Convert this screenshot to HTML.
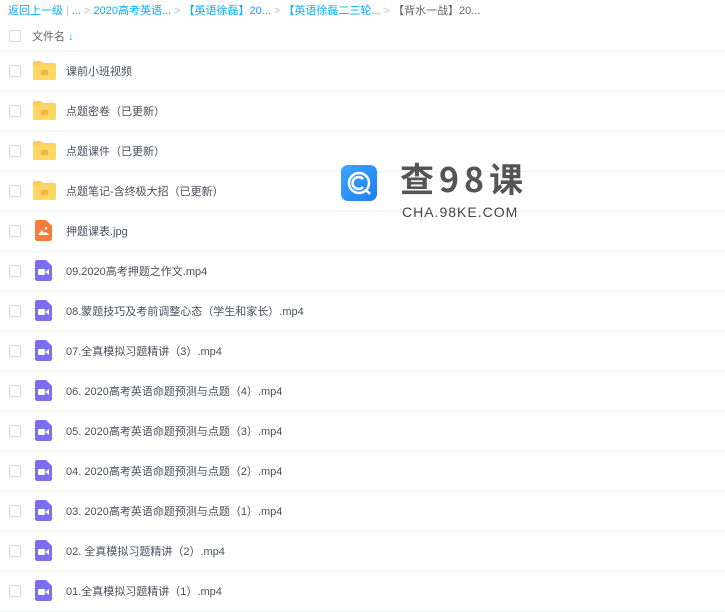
<!DOCTYPE html>
<html><head><meta charset="utf-8"><style>
*{margin:0;padding:0;box-sizing:border-box}
body{width:725px;height:600px;overflow:hidden;background:#fff;font-family:"Liberation Sans","Noto Sans CJK SC",sans-serif;font-size:11px;color:#4a4f5c;position:relative}
.bc{position:absolute;top:2px;left:8px;color:#09aaff;white-space:nowrap;font-size:11px}
.bc .g{color:#c0c4cc;margin:0 3px}
.bc .d{color:#666}
.cb{position:absolute;left:9px;width:12px;height:12px;border:1px solid #d5d9e0;border-radius:2px;background:#fff}
.hd{position:absolute;top:28px;left:32px;color:#666}
.line{position:absolute;left:0;width:725px;height:1px;background:#f1f2f5}
.row{position:absolute;left:0;width:725px;height:40px}
.row .cb{top:14px}
.row .t{position:absolute;left:66px;top:12px;white-space:nowrap}
.fold{position:absolute;left:33px;top:10px;width:23px;height:19px}
.fi{position:absolute;left:35px;top:9px;width:17px;height:21px;border-radius:2px}
</style></head><body>
<div class="bc">返回上一级<span class="g">|</span>...<span class="g">&gt;</span>2020高考英语...<span class="g">&gt;</span>【英语徐磊】20...<span class="g">&gt;</span>【英语徐磊二三轮...<span class="g">&gt;</span><span class="d">【背水一战】20...</span></div>
<div class="cb" style="top:30px"></div>
<div class="hd">文件名 <span style="color:#09aaff;font-weight:bold">↓</span></div>
<div class="line" style="top:51px"></div>

<div class="row" style="top:51px"><div class="cb"></div><svg class="fold" viewBox="0 0 23 19"><path d="M0 2a2 2 0 0 1 2-2h6l2 2h11a2 2 0 0 1 2 2v13a2 2 0 0 1-2 2H2a2 2 0 0 1-2-2z" fill="#fbcf54"/><rect x="0" y="4" width="23" height="15" rx="2" fill="#fcd766"/><rect x="8" y="9" width="7" height="5" fill="#f5b83a"/></svg><span class="t">课前小班视频</span></div>
<div class="line" style="top:91px"></div>
<div class="row" style="top:91px"><div class="cb"></div><svg class="fold" viewBox="0 0 23 19"><path d="M0 2a2 2 0 0 1 2-2h6l2 2h11a2 2 0 0 1 2 2v13a2 2 0 0 1-2 2H2a2 2 0 0 1-2-2z" fill="#fbcf54"/><rect x="0" y="4" width="23" height="15" rx="2" fill="#fcd766"/><rect x="8" y="9" width="7" height="5" fill="#f5b83a"/></svg><span class="t">点题密卷（已更新）</span></div>
<div class="line" style="top:131px"></div>
<div class="row" style="top:131px"><div class="cb"></div><svg class="fold" viewBox="0 0 23 19"><path d="M0 2a2 2 0 0 1 2-2h6l2 2h11a2 2 0 0 1 2 2v13a2 2 0 0 1-2 2H2a2 2 0 0 1-2-2z" fill="#fbcf54"/><rect x="0" y="4" width="23" height="15" rx="2" fill="#fcd766"/><rect x="8" y="9" width="7" height="5" fill="#f5b83a"/></svg><span class="t">点题课件（已更新）</span></div>
<div class="line" style="top:171px"></div>
<div class="row" style="top:171px"><div class="cb"></div><svg class="fold" viewBox="0 0 23 19"><path d="M0 2a2 2 0 0 1 2-2h6l2 2h11a2 2 0 0 1 2 2v13a2 2 0 0 1-2 2H2a2 2 0 0 1-2-2z" fill="#fbcf54"/><rect x="0" y="4" width="23" height="15" rx="2" fill="#fcd766"/><rect x="8" y="9" width="7" height="5" fill="#f5b83a"/></svg><span class="t">点题笔记-含终极大招（已更新）</span></div>
<div class="line" style="top:211px"></div>
<div class="row" style="top:211px"><div class="cb"></div><svg class="fi" viewBox="0 0 17 21"><path d="M0 2a2 2 0 0 1 2-2h9l6 6v13a2 2 0 0 1-2 2H2a2 2 0 0 1-2-2z" fill="#fa7a3e"/><path d="M3 15l4-5 2 3 2-1 3 3z" fill="#fff"/><circle cx="11" cy="8" r="1.3" fill="#fff"/></svg><span class="t">押题课表.jpg</span></div>
<div class="line" style="top:251px"></div>

<div id="vids"></div>
<script>
var n=["09.2020高考押题之作文.mp4","08.蒙题技巧及考前调整心态（学生和家长）.mp4","07.全真模拟习题精讲（3）.mp4","06. 2020高考英语命题预测与点题（4）.mp4","05. 2020高考英语命题预测与点题（3）.mp4","04. 2020高考英语命题预测与点题（2）.mp4","03. 2020高考英语命题预测与点题（1）.mp4","02. 全真模拟习题精讲（2）.mp4","01.全真模拟习题精讲（1）.mp4"];
var h="";n.forEach(function(s,i){var y=251+i*40;h+='<div class="row" style="top:'+y+'px"><div class="cb"></div><svg class="fi" viewBox="0 0 17 21"><path d="M0 2a2 2 0 0 1 2-2h9l6 6v13a2 2 0 0 1-2 2H2a2 2 0 0 1-2-2z" fill="#7a6ff0"/><rect x="3" y="9" width="7" height="6" rx="1" fill="#fff"/><path d="M10 12l4-3v6z" fill="#fff"/></svg><span class="t">'+s+'</span></div><div class="line" style="top:'+(y+40)+'px"></div>';});
document.getElementById("vids").innerHTML=h;
</script>

<div style="position:absolute;left:341px;top:165px;width:36px;height:36px;border-radius:7px;background:linear-gradient(135deg,#3aa6ff,#1f7ef0)">
<svg width="36" height="36" viewBox="0 0 36 36"><circle cx="18" cy="18" r="10" fill="none" stroke="#fff" stroke-width="2.5"/><path d="M22 14a6 6 0 1 0 0 8" fill="none" stroke="#fff" stroke-width="2.5"/><path d="M25 25l4 4" stroke="#fff" stroke-width="2.5"/></svg></div>
<div style="position:absolute;left:400px;top:158px;font-size:34px;font-weight:bold;color:#555;letter-spacing:5px;white-space:nowrap;font-family:'Noto Sans CJK SC',sans-serif;line-height:40px">查98课</div>
<div style="position:absolute;left:402px;top:204px;font-size:14px;color:#444;letter-spacing:1px;white-space:nowrap">CHA.98KE.COM</div>
</body></html>
